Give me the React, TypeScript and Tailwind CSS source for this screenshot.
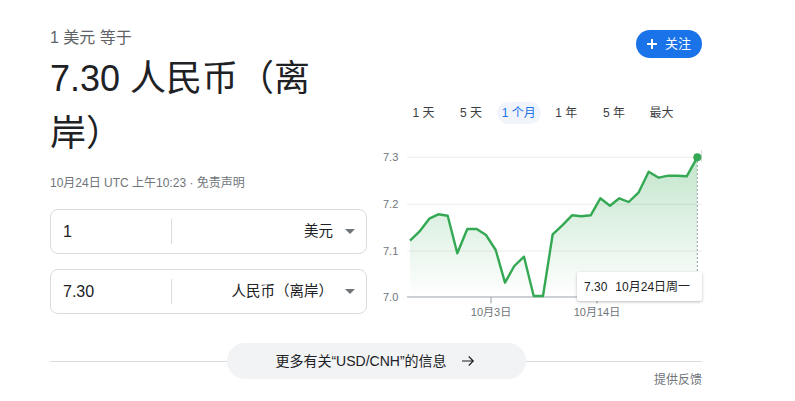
import React from 'react'

const font = "font-['Liberation_Sans','Noto_Sans_CJK_SC',sans-serif]"

const points: [number, number][] = [
  [410, 240.7], [419.3, 231.7], [429.3, 218.7], [438.3, 214.3], [447.7, 215.7],
  [457.3, 253.3], [467.3, 229], [476.7, 229], [486, 235], [495.7, 250],
  [505, 282.7], [514.3, 266], [524, 256.7], [533.7, 296], [543, 296],
  [552.7, 234.3], [562.3, 225.3], [572, 215.3], [581.3, 216.3], [590.7, 215.3],
  [600.3, 198.3], [610, 205.7], [619.3, 198.3], [628.7, 202], [638.7, 192.3],
  [648.7, 171.7], [658.7, 177.7], [668.3, 175.7], [677.3, 175.7], [686.7, 176.3],
  [697.3, 157.3],
]

const ranges = ['1 天', '5 天', '1 个月', '1 年', '5 年', '最大']

function Caret() {
  return (
    <svg width="10" height="5" viewBox="0 0 10 5" className="shrink-0">
      <path d="M0 0h10L5 5z" fill="#70757a" />
    </svg>
  )
}

function CurrencyBox({ value, label }: { value: string; label: string }) {
  return (
    <div className="h-[45px] border border-[#dadce0] rounded-[8px] flex items-center">
      <div className="w-[120px] pl-3 text-[16px] text-[#202124]">{value}</div>
      <div className="w-px h-[25px] bg-[#dadce0]" />
      <div className="flex-1 flex items-center justify-end gap-3 pr-[11px] text-[14.5px] text-[#202124]">
        <span>{label}</span>
        <Caret />
      </div>
    </div>
  )
}

function Chart() {
  const line = points.map(p => p.join(',')).join(' ')
  const area = `${line} 697.3,297 410,297`
  const grid = [
    { y: 157.3, label: '7.3' },
    { y: 204.3, label: '7.2' },
    { y: 251, label: '7.1' },
  ]
  return (
    <div className="relative mt-[6px]">
      <svg width="319" height="195" viewBox="383 130 319 195" className="block">
        <defs>
          <linearGradient id="fill" x1="0" y1="157" x2="0" y2="297" gradientUnits="userSpaceOnUse">
            <stop offset="0" stopColor="#34a853" stopOpacity="0.3" />
            <stop offset="1" stopColor="#34a853" stopOpacity="0" />
          </linearGradient>
        </defs>
        {grid.map(g => (
          <g key={g.label}>
            <line x1="407" x2="702" y1={g.y} y2={g.y} stroke="#ececec" strokeWidth="1" />
            <text x="383" y={g.y} dominantBaseline="central" fontSize="11" fill="#70757a" fontFamily="Liberation Sans, sans-serif">
              {g.label}
            </text>
          </g>
        ))}
        <text x="383" y="297" dominantBaseline="central" fontSize="11" fill="#70757a" fontFamily="Liberation Sans, sans-serif">
          7.0
        </text>
        <polygon points={area} fill="url(#fill)" />
        <line x1="407" x2="702" y1="297" y2="297" stroke="#bdc1c6" strokeWidth="1.5" />
        <line x1="491" x2="491" y1="297" y2="303.5" stroke="#9aa0a6" strokeWidth="1" />
        <line x1="597" x2="597" y1="297" y2="303.5" stroke="#9aa0a6" strokeWidth="1" />
        <line x1="697.3" x2="697.3" y1="157" y2="297" stroke="#9aa0a6" strokeWidth="1" strokeDasharray="2 2" />
        <polyline points={line} fill="none" stroke="#34a853" strokeWidth="2.4" strokeLinejoin="round" />
        <circle cx="697.3" cy="157.3" r="4" fill="#34a853" />
        <line x1="702.3" x2="702.3" y1="150" y2="162" stroke="#3c4043" strokeWidth="1" />
        <text x="491" y="311.7" textAnchor="middle" dominantBaseline="central" fontSize="11" fill="#70757a" fontFamily="Liberation Sans, Noto Sans CJK SC, sans-serif">
          10月3日
        </text>
        <text x="597" y="311.7" textAnchor="middle" dominantBaseline="central" fontSize="11" fill="#70757a" fontFamily="Liberation Sans, Noto Sans CJK SC, sans-serif">
          10月14日
        </text>
      </svg>
      <div className="absolute left-[194px] top-[142px] w-[125px] h-[29px] bg-white shadow-[0_1px_3px_rgba(60,64,67,0.35)] rounded-[2px] flex items-center pl-[7px] gap-[8px] text-[12px] text-[#202124]">
        <span>7.30</span>
        <span>10月24日周一</span>
      </div>
    </div>
  )
}

export default function App() {
  return (
    <div className={`${font} w-[795px] h-[401px] bg-white pl-[50px] pt-[25px]`}>
      <div className="w-[652px] flex gap-4">
        <div className="w-[317px]">
          <div className="text-[16px] leading-[26px] text-[#5f6368]">1 美元 等于</div>
          <div className="w-[282px] text-[36px] leading-[55px] text-[#202124]">7.30 人民币（离岸）</div>
          <div className="mt-[14px] text-[12px] leading-[16px] text-[#70757a]">10月24日 UTC 上午10:23 · 免责声明</div>
          <div className="mt-[18px]">
            <CurrencyBox value="1" label="美元" />
          </div>
          <div className="mt-[15px]">
            <CurrencyBox value="7.30" label="人民币（离岸）" />
          </div>
        </div>
        <div className="w-[319px]">
          <div className="flex justify-end mt-[5px]">
            <button className="w-[66px] h-[28px] rounded-full bg-[#1a73e8] text-white flex items-center justify-center gap-[8px] text-[13px]">
              <svg width="10" height="10" viewBox="0 0 10 10">
                <path d="M5 0v10M0 5h10" stroke="white" strokeWidth="2" />
              </svg>
              <span>关注</span>
            </button>
          </div>
          <div className="mt-[44px] flex justify-center">
            {ranges.map(r => (
              <div key={r} className="w-[47.6px] flex justify-center">
                <span
                  className={`h-[22px] px-[5px] rounded-full flex items-center whitespace-nowrap text-[12px] ${
                    r === '1 个月' ? 'bg-[#f1f5fb] text-[#1a73e8]' : 'text-[#3c4043]'
                  }`}
                >
                  {r}
                </span>
              </div>
            ))}
          </div>
          <Chart />
        </div>
      </div>
      <div className="w-[652px] mt-[18px] flex items-center">
        <div className="flex-1 h-px bg-[#dadce0]" />
        <div className="w-[299px] h-[36px] rounded-full bg-[#f1f3f4] flex items-center justify-center gap-[12px] text-[14px] text-[#202124]">
          <span>更多有关“USD/CNH”的信息</span>
          <svg width="18" height="18" viewBox="0 0 24 24">
            <path d="M4 12h15M13 6l6 6-6 6" fill="none" stroke="#202124" strokeWidth="1.6" />
          </svg>
        </div>
        <div className="flex-1 h-px bg-[#dadce0]" />
      </div>
      <div className="w-[652px] -mt-[7px] text-right text-[12px] leading-[16px] text-[#70757a]">提供反馈</div>
    </div>
  )
}
